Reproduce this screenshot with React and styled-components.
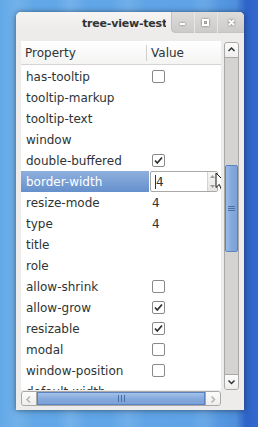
import React from 'react';
import styled, { createGlobalStyle } from 'styled-components';

const GlobalStyle = createGlobalStyle`
    html, body {
        margin: 0;
        padding: 0;
    }

    body {
        font-family: "DejaVu Sans", "Liberation Sans", sans-serif;
        font-size: 12px;
        color: #2e3436;
    }
`;

const rows = [
    { name: 'has-tooltip', kind: 'check', checked: false },
    { name: 'tooltip-markup' },
    { name: 'tooltip-text' },
    { name: 'window' },
    { name: 'double-buffered', kind: 'check', checked: true },
    { name: 'border-width', kind: 'spin', value: '4', selected: true },
    { name: 'resize-mode', kind: 'text', value: '4' },
    { name: 'type', kind: 'text', value: '4' },
    { name: 'title' },
    { name: 'role' },
    { name: 'allow-shrink', kind: 'check', checked: false },
    { name: 'allow-grow', kind: 'check', checked: true },
    { name: 'resizable', kind: 'check', checked: true },
    { name: 'modal', kind: 'check', checked: false },
    { name: 'window-position', kind: 'check', checked: false },
    { name: 'default-width' }
];

const Check = () => (
    <svg width="11" height="11" viewBox="0 0 11 11">
        <path d="M2 5.5 L4.3 8 L9 2.5" fill="none" stroke="#2e3436" strokeWidth="1.8" />
    </svg>
);

const Pointer = () => (
    <svg width="13" height="20" viewBox="0 0 13 20">
        <path d="M1 1 L1 15.5 L4.3 12.4 L6.8 18.5 L9.3 17.4 L6.9 11.6 L11.5 11.6 Z" fill="#ffffff" stroke="#111" strokeWidth="1" strokeLinejoin="round" />
    </svg>
);

const Arrow = ({ dir }) => {
    const paths = {
        up: 'M1.5 5 L4.5 2 L7.5 5',
        down: 'M1.5 2.5 L4.5 5.5 L7.5 2.5',
        left: 'M5 1.5 L2 4.5 L5 7.5',
        right: 'M2.5 1.5 L5.5 4.5 L2.5 7.5'
    };
    const dark = dir === 'up' || dir === 'down';

    return (
        <svg width="9" height="8" viewBox="0 0 9 8">
            <path d={ paths[dir] } fill="none" stroke={ dark ? '#2e3436' : '#b4b4b4' } strokeWidth="1.5" />
        </svg>
    );
};

const App = () => (
    <>
        <GlobalStyle />
        <Desktop>
            <Window>
                <TitleBar>
                    <Title>tree-view-test</Title>
                    <WindowButtons>
                        <WindowButton>
                            <Glyph>
                                <svg width="7" height="7" viewBox="0 0 7 7"><rect x="1" y="4" width="5" height="2" fill="#fff" /></svg>
                            </Glyph>
                        </WindowButton>
                        <WindowButton>
                            <Glyph>
                                <svg width="7" height="7" viewBox="0 0 7 7"><rect x="1" y="1" width="5" height="5" fill="none" stroke="#fff" strokeWidth="2" /></svg>
                            </Glyph>
                        </WindowButton>
                        <WindowButton last>
                            <Glyph>
                                <svg width="7" height="7" viewBox="0 0 7 7"><path d="M1 1 L6 6 M6 1 L1 6" stroke="#fff" strokeWidth="2" /></svg>
                            </Glyph>
                        </WindowButton>
                    </WindowButtons>
                </TitleBar>

                <Body>
                    <Tree>
                        <Header>
                            <HeaderCell divider>Property</HeaderCell>
                            <HeaderCell>Value</HeaderCell>
                        </Header>
                        <Rows>
                            { rows.map(row => (
                                <Row key={ row.name }>
                                    <NameCell selected={ row.selected }>{ row.name }</NameCell>
                                    <ValueCell>
                                        { row.kind === 'check' && (
                                            <CheckBox>{ row.checked && <Check /> }</CheckBox>
                                        ) }
                                        { row.kind === 'text' && row.value }
                                        { row.kind === 'spin' && (
                                            <Spin>
                                                <Caret />
                                                <SpinText>{ row.value }</SpinText>
                                                <SpinButtons>
                                                    <SpinArrow>
                                                        <svg width="5" height="3" viewBox="0 0 5 3"><path d="M0 3 L2.5 0 L5 3 Z" fill="#9a9a9a" /></svg>
                                                    </SpinArrow>
                                                    <SpinArrow>
                                                        <svg width="5" height="3" viewBox="0 0 5 3"><path d="M0 0 L2.5 3 L5 0 Z" fill="#9a9a9a" /></svg>
                                                    </SpinArrow>
                                                </SpinButtons>
                                                <Cursor><Pointer /></Cursor>
                                            </Spin>
                                        ) }
                                    </ValueCell>
                                </Row>
                            )) }
                        </Rows>
                    </Tree>

                    <VScroll>
                        <StepButton vertical top><Arrow dir="up" /></StepButton>
                        <VThumb offset={ 107 } length={ 87 }>
                            <svg width="7" height="7" viewBox="0 0 7 7">
                                <path d="M0 1.5 H7 M0 3.5 H7 M0 5.5 H7" stroke="#4a6fa5" strokeWidth="1" />
                            </svg>
                        </VThumb>
                        <StepButton vertical bottom><Arrow dir="down" /></StepButton>
                    </VScroll>

                    <HScroll>
                        <StepButton left><Arrow dir="left" /></StepButton>
                        <HThumb>
                            <svg width="9" height="7" viewBox="0 0 9 7">
                                <path d="M1.5 0 V7 M4.5 0 V7 M7.5 0 V7" stroke="#4a6fa5" strokeWidth="1" />
                            </svg>
                        </HThumb>
                        <StepButton right><Arrow dir="right" /></StepButton>
                    </HScroll>
                    <Corner />
                </Body>
            </Window>
        </Desktop>
    </>
);

const Desktop = styled.div`
    width: 258px;
    height: 427px;
    overflow: hidden;
    box-sizing: border-box;
    padding: 12px 0 0 16px;
    background:
        linear-gradient(90deg,
            rgba(255,255,255,0) 0px, rgba(255,255,255,0.10) 18px, rgba(255,255,255,0) 34px,
            rgba(255,255,255,0) 56px, rgba(255,255,255,0.12) 70px, rgba(255,255,255,0) 86px,
            rgba(255,255,255,0) 110px, rgba(255,255,255,0.10) 128px, rgba(255,255,255,0) 146px,
            rgba(255,255,255,0) 190px, rgba(255,255,255,0.08) 205px, rgba(255,255,255,0) 220px),
        linear-gradient(90deg, #63a9e8 0px, #5fa3e6 200px, #4f8fdc 236px, #2f63c8 246px, #3568cc 258px);
`;

const Window = styled.div`
    width: 228px;
    height: 398px;
    background: #edeceb;
    border-radius: 5px 5px 0 0;
    box-shadow: 0 0 4px rgba(0, 0, 0, 0.35), 0 1px 8px rgba(0, 0, 0, 0.2);
    display: flex;
    flex-direction: column;
    overflow: hidden;
`;

const TitleBar = styled.div`
    height: 29px;
    display: flex;
    align-items: flex-start;
    background: linear-gradient(#f6f5f4, #edeceb 60%);
`;

const Title = styled.div`
    width: 151px;
    height: 23px;
    box-sizing: border-box;
    padding: 5px 0 0 66px;
    overflow: hidden;
    white-space: nowrap;
    font-weight: bold;
    font-size: 11px;
    letter-spacing: -0.2px;
    color: #2e3436;
`;

const WindowButtons = styled.div`
    margin-left: 5px;
    display: flex;
    height: 21px;
    border-radius: 0 0 0 5px;
    overflow: hidden;
    background: linear-gradient(#dedddc, #cbcac9);
    box-shadow: inset 1px 0 0 #c2c1c0, inset 0 -1px 0 #c6c5c4;
`;

const WindowButton = styled.div`
    width: ${ props => props.last ? '26px' : '23px' };
    display: flex;
    align-items: center;
    justify-content: center;
    border-right: ${ props => props.last ? 'none' : '1px solid #e8e7e6' };
`;

const Glyph = styled.div`
    display: flex;
    filter: drop-shadow(0 0 1px rgba(60, 60, 60, 0.7));
`;

const Body = styled.div`
    flex: 1;
    display: grid;
    grid-template-columns: 200px 15px;
    grid-template-rows: 349px 15px;
    column-gap: 3px;
    row-gap: 1px;
    padding: 0 0 0 5px;
`;

const Tree = styled.div`
    background: #ffffff;
    overflow: hidden;
    display: flex;
    flex-direction: column;
`;

const Header = styled.div`
    height: 23px;
    flex: none;
    display: grid;
    grid-template-columns: 126px 1fr;
    background: linear-gradient(#ffffff, #f4f4f3);
    border-bottom: 1px solid #d5d4d2;
`;

const HeaderCell = styled.div`
    display: flex;
    align-items: center;
    padding-left: 4px;
    font-size: 12px;
    color: #2e3436;
    position: relative;

    &::after {
        content: '';
        display: ${ props => props.divider ? 'block' : 'none' };
        position: absolute;
        right: 0;
        top: 4px;
        bottom: 3px;
        width: 1px;
        background: #d0cfcd;
    }
`;

const Rows = styled.div`
    padding-top: 1px;
`;

const Row = styled.div`
    height: 21px;
    display: grid;
    grid-template-columns: 128px 1fr;
`;

const NameCell = styled.div`
    display: flex;
    align-items: center;
    padding-left: 5px;
    white-space: nowrap;
    color: ${ props => props.selected ? '#ffffff' : '#2e3436' };
    background: ${ props => props.selected ? 'linear-gradient(#8eb0de, #6690cc)' : 'transparent' };
`;

const ValueCell = styled.div`
    display: flex;
    align-items: center;
    padding-left: 3px;
    color: #2e3436;
`;

const CheckBox = styled.div`
    width: 11px;
    height: 11px;
    border: 1px solid #8a8988;
    border-radius: 2px;
    background: #ffffff;
    display: flex;
    align-items: center;
    justify-content: center;
`;

const Spin = styled.div`
    position: relative;
    margin-left: -2px;
    width: 68px;
    height: 21px;
    box-sizing: border-box;
    border: 1px solid #a9a8a6;
    border-radius: 2px;
    background: #ffffff;
    display: flex;
    align-items: center;
`;

const Caret = styled.div`
    width: 1px;
    height: 14px;
    margin-left: 4px;
    background: #2e3436;
`;

const SpinText = styled.div`
    flex: 1;
`;

const SpinButtons = styled.div`
    width: 9px;
    height: 19px;
    display: flex;
    flex-direction: column;
    border-left: 1px solid #d4d3d1;
    background: linear-gradient(#f7f7f6, #e6e5e4);
`;

const SpinArrow = styled.div`
    flex: 1;
    display: flex;
    align-items: center;
    justify-content: center;
`;

const Cursor = styled.div`
    position: absolute;
    left: 64px;
    top: 0px;
    display: flex;
`;

const VScroll = styled.div`
    display: flex;
    flex-direction: column;
    box-sizing: border-box;
    border: 1px solid #a9a8a6;
    border-radius: 3px;
    background: #d4d3d2;
    overflow: hidden;
    height: 348px;
    margin-top: 1px;
`;

const StepButton = styled.div`
    flex: none;
    display: flex;
    align-items: center;
    justify-content: center;
    box-sizing: border-box;
    width: ${ props => props.vertical ? '100%' : '15px' };
    height: ${ props => props.vertical ? '15px' : '100%' };
    margin-top: ${ props => props.bottom ? 'auto' : '0' };
    background: linear-gradient(#fbfbfb, #efeeed);
    border-bottom: ${ props => props.top ? '1px solid #a9a8a6' : 'none' };
    border-top: ${ props => props.bottom ? '1px solid #a9a8a6' : 'none' };
    border-right: ${ props => props.left ? '1px solid #a9a8a6' : 'none' };
    border-left: ${ props => props.right ? '1px solid #a9a8a6' : 'none' };
`;

const VThumb = styled.div`
    margin-top: ${ props => props.offset }px;
    height: ${ props => props.length }px;
    box-sizing: border-box;
    border: 1px solid #5a83bf;
    border-radius: 2px;
    background: linear-gradient(90deg, #9dbde6, #84a9dc 50%, #7aa1d7);
    display: flex;
    align-items: center;
    justify-content: center;
`;

const HScroll = styled.div`
    display: flex;
    box-sizing: border-box;
    border: 1px solid #a9a8a6;
    border-radius: 3px;
    background: #d4d3d2;
    overflow: hidden;
`;

const HThumb = styled.div`
    flex: 1;
    box-sizing: border-box;
    border: 1px solid #5a83bf;
    background: linear-gradient(#a3c1e8, #84a9dc 55%, #7aa1d7);
    display: flex;
    align-items: center;
    justify-content: center;
`;

const Corner = styled.div``;

export default App;
